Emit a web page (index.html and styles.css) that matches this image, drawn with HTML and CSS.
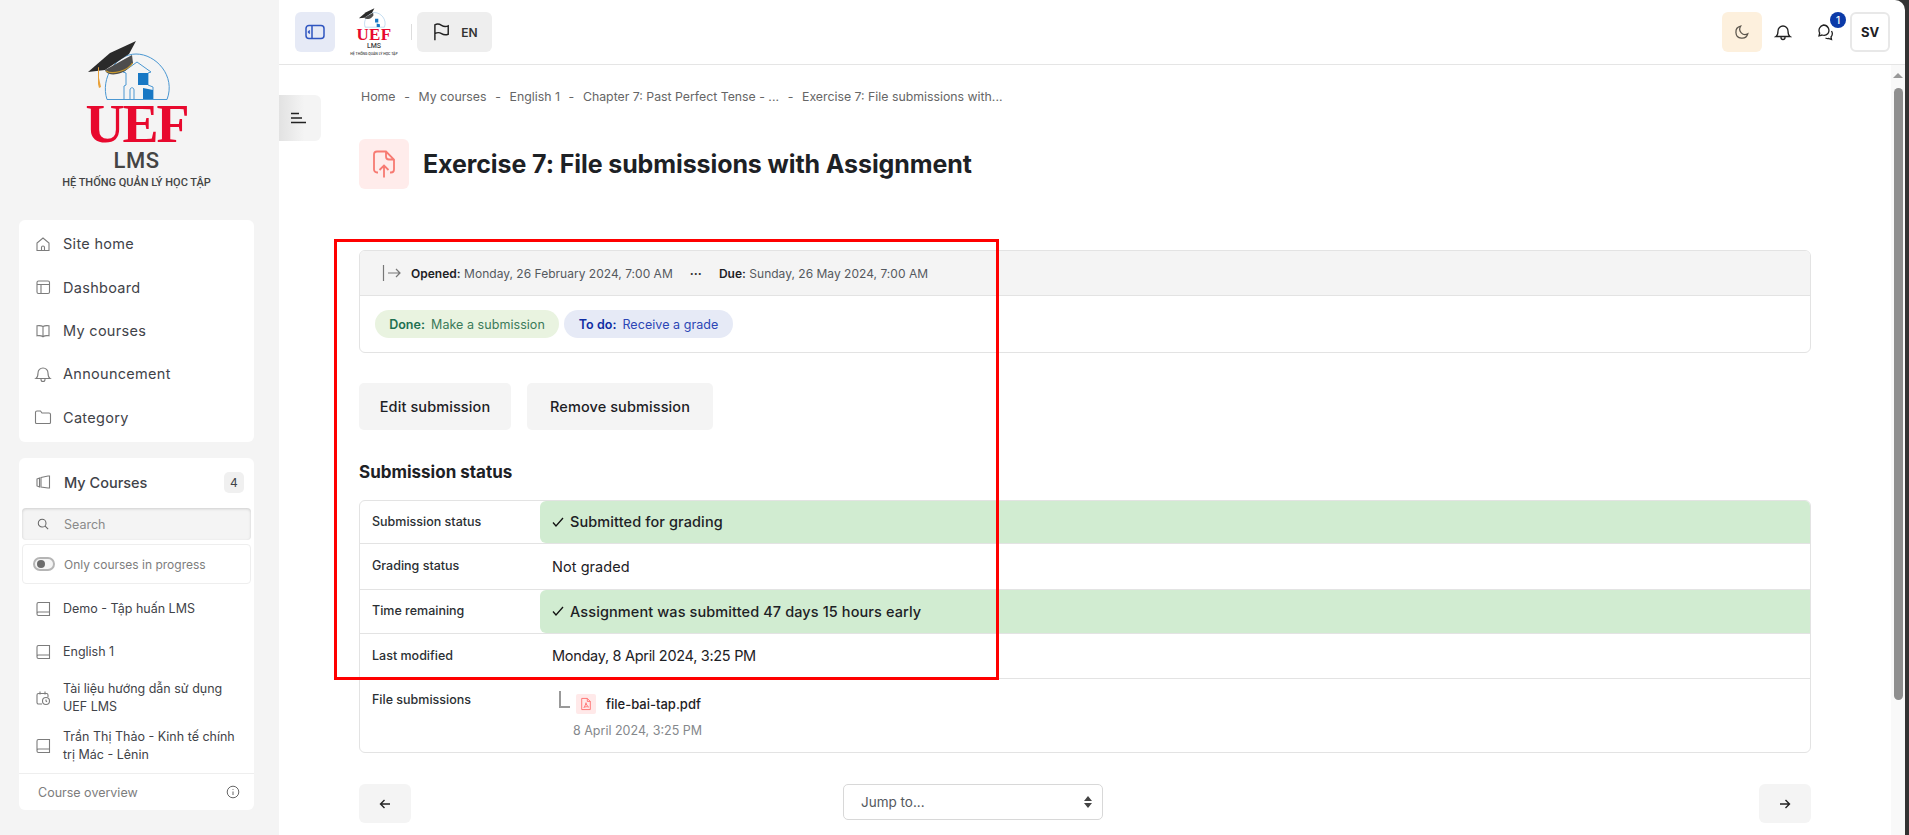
FILE: index.html
```html
<!DOCTYPE html>
<html lang="en">
<head>
<meta charset="utf-8">
<title>Exercise 7: File submissions with Assignment</title>
<link rel="stylesheet" href="styles.css">
</head>
<body>
<div class="window">
  <aside class="sidebar">
    <div class="brand">
      <svg class="brand-art" viewBox="0 0 85 62" aria-hidden="true">
        <path class="arch" d="M21 59.500C14 38 30 14 50 14C70 14 90 36 81 59.500Z"/>
        <path class="tower" d="M38 59V46L40 45V33L37 32L51 22L65 32L62 33V45L67 47V59M44 59V50C44 47 48 47 48 50V59"/>
        <path class="tower-blue" d="M52 33H62V45H52ZM57 48L67 50V59H57Z"/>
        <path class="cap-b" d="M19 30L46 15L47 23C43 29 37 33 31 34C26 35 22 34 20 32Z"/>
        <path class="cap-line" d="M20 31C26 35 42 31 46.500 23"/>
        <path class="cap-t" d="M2 32L24 13L50 1L43 14L19 30Z"/>
        <path class="tassel" d="M12 27.500L13 27V38L15 47L13 48L12 44Z"/>
      </svg>
      <div class="brand-uef">UEF</div>
      <div class="brand-lms">LMS</div>
      <div class="brand-sub">HỆ THỐNG QUẢN LÝ HỌC TẬP</div>
    </div>

    <nav class="card nav-card">
      <a class="nav-item"><svg class="ico" viewBox="0 0 16 16"><path d="M2 14.500V7L8 2l6 5v7.500zM6.500 14.500v-3a1.500 1.500 0 0 1 3 0v3"/></svg>Site home</a>
      <a class="nav-item"><svg class="ico" viewBox="0 0 16 16"><rect x="2" y="2" width="12.500" height="12.500" rx="1.500"/><path d="M2 5.500h12.500M6 5.500v9"/></svg>Dashboard</a>
      <a class="nav-item"><svg class="ico" viewBox="0 0 16 16"><path d="M8 3.500C6.500 2.600 4 2.500 2 2.800v10c2-.3 4.500-.2 6 .9 1.500-1.100 4-1.200 6-.9v-10c-2-.3-4.500-.2-6 .7zM8 3.500v10.200"/></svg>My courses</a>
      <a class="nav-item"><svg class="ico ico-l" viewBox="0 0 18 18"><path d="M2 13.500c1.500-1 2-2.500 2-5.500a5 5 0 0 1 10 0c0 3 .5 4.500 2 5.500zM7 13.500v1a2 2 0 0 0 4 0v-1"/></svg>Announcement</a>
      <a class="nav-item"><svg class="ico ico-l" viewBox="0 0 18 18"><path d="M1.500 4.500a1.500 1.500 0 0 1 1.500-1.500h3.500l1.500 2h7a1.500 1.500 0 0 1 1.500 1.500v8a1 1 0 0 1-1 1H2.500a1 1 0 0 1-1-1z"/></svg>Category</a>
    </nav>

    <section class="card courses-card">
      <header class="courses-head">
        <svg class="ico" viewBox="0 0 16 16"><path d="M6 3.500l7-1.500h1.500v12H13l-7-1zM6 3.500v9.500M2 5l2.500-1v9L2 12z"/></svg>
        <span class="courses-title">My Courses</span>
        <span class="count">4</span>
      </header>
      <div class="search">
        <svg class="ico-search" viewBox="0 0 14 14"><circle cx="6" cy="6" r="4.500"/><path d="M9.500 9.500L13 13"/></svg>
        <span>Search</span>
      </div>
      <div class="progress-toggle">
        <span class="switch"><span class="knob"></span></span>
        <span>Only courses in progress</span>
      </div>
      <ul class="course-list">
        <li class="course course-one"><svg class="ico" viewBox="0 0 16 16"><path d="M2 12.500V3a1.500 1.500 0 0 1 1.500-1.500h11V14.500h-11A1.500 1.500 0 0 1 2 13v-.5A1.500 1.500 0 0 1 3.500 11h11"/></svg>Demo - Tập huấn LMS</li>
        <li class="course course-one"><svg class="ico" viewBox="0 0 16 16"><path d="M2 12.500V3a1.500 1.500 0 0 1 1.500-1.500h11V14.500h-11A1.500 1.500 0 0 1 2 13v-.5A1.500 1.500 0 0 1 3.500 11h11"/></svg>English 1</li>
        <li class="course course-two"><svg class="ico" viewBox="0 0 16 16"><path d="M7 14H3.500A1.500 1.500 0 0 1 2 12.500V5a1.500 1.500 0 0 1 1.500-1.500h8A1.500 1.500 0 0 1 13 5v2M5 1.500v3M10 1.500v3"/><circle cx="11" cy="11" r="3.500"/><path d="M11 9.500V11l1 .8"/></svg><span>Tài liệu hướng dẫn sử dụng UEF LMS</span></li>
        <li class="course course-two"><svg class="ico" viewBox="0 0 16 16"><path d="M2 12.500V3a1.500 1.500 0 0 1 1.500-1.500h11V14.500h-11A1.500 1.500 0 0 1 2 13v-.5A1.500 1.500 0 0 1 3.500 11h11"/></svg><span>Trần Thị Thảo - Kinh tế chính trị Mác - Lênin</span></li>
      </ul>
      <footer class="courses-foot">
        <span>Course overview</span>
        <svg class="ico-info" viewBox="0 0 14 14"><circle cx="7" cy="7" r="5.800"/><path d="M7 6.500v3.500M7 4v.8"/></svg>
      </footer>
    </section>
  </aside>

  <div class="main">
    <header class="topbar">
      <button class="tb-btn tb-blue"><svg viewBox="0 0 20 20" class="tb-ico"><rect x="1" y="3.500" width="18" height="13" rx="3"/><path d="M7 3.500v13M4.800 8.500L3.500 10l1.300 1.500"/></svg></button>
      <div class="mini-brand">
        <svg class="mini-art" viewBox="0 0 85 62" aria-hidden="true">
          <path class="arch" d="M21 59.500C14 38 30 14 50 14C70 14 90 36 81 59.500Z"/>
          <path class="tower-blue" d="M52 33H62V45H52ZM57 48L67 50V59H57Z"/>
          <path class="cap-b" d="M19 30L46 15L47 23C43 29 37 33 31 34C26 35 22 34 20 32Z"/>
          <path class="cap-t" d="M2 32L24 13L50 1L43 14L19 30Z"/>
        </svg>
        <div class="mini-uef">UEF</div>
        <div class="mini-lms">LMS</div>
        <div class="mini-sub">HỆ THỐNG QUẢN LÝ HỌC TẬP</div>
      </div>
      <span class="tb-divider"></span>
      <button class="tb-btn tb-lang"><svg viewBox="0 0 18 18" class="tb-ico-dark tb-flag"><path d="M3.500 16.500V2.500C6 1 8 2 9.500 3s3.500 1.500 6 .5V11c-2.500 1-4.500.5-6-.5S6 9 3.500 10.500"/></svg><span>EN</span></button>
      <span class="tb-spacer"></span>
      <button class="tb-btn tb-moon"><svg viewBox="0 0 18 18" class="tb-ico-moon"><path d="M7.500 2.500a6.800 6.800 0 1 0 8 8.500 6 6 0 0 1-8-8.500z"/></svg></button>
      <button class="tb-plain"><svg viewBox="0 0 18 18" class="tb-ico-dark"><path d="M2 13.500c1.500-1 2-2.500 2-5.500a5 5 0 0 1 10 0c0 3 .5 4.500 2 5.500zM7 13.500v1a2 2 0 0 0 4 0v-1"/></svg></button>
      <button class="tb-plain tb-chat"><svg viewBox="0 0 18 18" class="tb-ico-dark"><path d="M7.500 2a5.500 5.500 0 0 1 4.500 8.500 5.500 5.500 0 0 1-6 1.500L3 12.800l.7-2.800A5.500 5.500 0 0 1 7.500 2zM15.500 8c1.200 2 .8 4.500-.5 6l.5 2.500-3-1c-1 .2-2 0-3-.5"/></svg><span class="chat-badge">1</span></button>
      <button class="tb-btn tb-user">SV</button>
    </header>

    <div class="body-row">
      <button class="drawer-toggle"><svg viewBox="0 0 16 12"><path d="M1 1.500h8M1 6h11M1 10.500h15"/></svg></button>
      <main class="content">
        <ol class="crumbs">
          <li>Home</li><li class="sep">-</li>
          <li>My courses</li><li class="sep">-</li>
          <li>English 1</li><li class="sep">-</li>
          <li>Chapter 7: Past Perfect Tense - ...</li><li class="sep">-</li>
          <li>Exercise 7: File submissions with...</li>
        </ol>
        <div class="page-head">
          <span class="page-ico"><svg viewBox="0 0 24 28"><path d="M6 22H5a3 3 0 0 1-3-3V4a3 3 0 0 1 3-3h9l8 8v10a3 3 0 0 1-3 3h-1M14 1v5a3 3 0 0 0 3 3h5M12 27V15M7.500 19.500L12 15l4.500 4.500"/></svg></span>
          <h1>Exercise 7: File submissions with Assignment</h1>
        </div>

        <section class="activity">
          <div class="dates">
            <svg class="date-ico" viewBox="0 0 20 18"><path class="date-bar" d="M1.500 1v16"/><path d="M6 9h12M14 5l4 4-4 4"/></svg>
            <span><b>Opened:</b> Monday, 26 February 2024, 7:00 AM</span>
            <span class="dots">···</span>
            <span><b>Due:</b> Sunday, 26 May 2024, 7:00 AM</span>
          </div>
          <div class="pills">
            <span class="pill pill-done"><b>Done:</b> Make a submission</span>
            <span class="pill pill-todo"><b>To do:</b> Receive a grade</span>
          </div>
        </section>

        <div class="actions">
          <button class="btn btn-edit">Edit submission</button>
          <button class="btn btn-remove">Remove submission</button>
        </div>

        <h2>Submission status</h2>

        <div class="status">
          <div class="row row-a"><div class="label">Submission status</div><div class="value ok"><svg class="check" viewBox="0 0 12 10"><path d="M1 5.500L4 9l7-8"/></svg>Submitted for grading</div></div>
          <div class="row row-b"><div class="label">Grading status</div><div class="value">Not graded</div></div>
          <div class="row row-c"><div class="label">Time remaining</div><div class="value ok"><svg class="check" viewBox="0 0 12 10"><path d="M1 5.500L4 9l7-8"/></svg>Assignment was submitted 47 days 15 hours early</div></div>
          <div class="row row-d"><div class="label">Last modified</div><div class="value">Monday, 8 April 2024, 3:25 PM</div></div>
          <div class="row row-e">
            <div class="label label-top">File submissions</div>
            <div class="files">
              <div class="file-line">
                <span class="tree"></span>
                <span class="pdf"><svg viewBox="0 0 14 16"><path d="M2 1.500h6.500L12 5v9.500H2zM8.500 1.500V5H12M4.500 12c1-1 2.500-4 2.500-5.500 0 1.500 1.500 4 3 5-1.500-.5-4-.5-5.500.5z"/></svg></span>
                <span class="file-name">file-bai-tap.pdf</span>
              </div>
              <div class="file-date">8 April 2024, 3:25 PM</div>
            </div>
          </div>
        </div>

        <div class="pager">
          <button class="pager-btn"><svg viewBox="0 0 12 12"><path d="M11 6H1.500M5.500 2L1.500 6l4 4"/></svg></button>
          <div class="jump"><span>Jump to...</span><svg viewBox="0 0 8 12"><path d="M4 0L8 5H0zM4 12L0 7h8z"/></svg></div>
          <button class="pager-btn"><svg viewBox="0 0 12 12"><path d="M1 6h9.500M6.500 2l4 4-4 4"/></svg></button>
        </div>
      </main>
      <div class="scrollbar">
        <span class="sb-up"></span>
        <span class="sb-thumb"></span>
      </div>
    </div>
    <div class="annotation"></div>
  </div>
</div>
</body>
</html>
```

FILE: styles.css
```css
* { box-sizing: border-box; }
html, body { margin: 0; height: 100%; overflow: hidden; }
body { background: #333; font-family: Inter, "Noto Sans", sans-serif; color: #1d2125; }
button { font: inherit; border: 0; padding: 0; margin: 0; color: inherit; }
ul, ol { list-style: none; margin: 0; padding: 0; }

.window { display: flex; height: 835px; width: 1905px; background: #fff; border-top-right-radius: 10px; overflow: hidden; }

/* sidebar */
.sidebar { width: 279px; flex: none; background: #f4f4f4; padding: 0 25px 0 19px; }
.brand { height: 220px; padding-top: 40px; display: flex; flex-direction: column; align-items: center; margin: 0 -6px 0 -6px; }
.brand-art { width: 85px; height: 62px; margin-right: 16px; flex: none; }
.arch { fill: none; stroke: #4a97d2; stroke-width: 1; }
.tower { fill: none; stroke: #4a97d2; stroke-width: 1; }
.tower-blue { fill: #1878c4; }
.cap-b { fill: #4d4d4d; }
.cap-line { fill: none; stroke: #c99a2e; stroke-width: 1.200; }
.cap-t { fill: #2a2a2a; }
.tassel { fill: #e9a23b; }
.brand-uef { font: 700 54px/42px "Liberation Serif", serif; color: #e8092e; letter-spacing: -2px; margin-top: 1px; }
.brand-lms { font: 500 22px/24px Roboto, sans-serif; color: #444; letter-spacing: .5px; margin-top: 4px; }
.brand-sub { font: 500 11px/14px Roboto, sans-serif; color: #444; margin-top: 3px; white-space: nowrap; }

.card { background: #fff; border-radius: 6px; }
.ico, .ico-l { width: 16px; height: 16px; flex: none; fill: none; stroke: #7c7c7c; stroke-width: 1.100; }
.ico-l { width: 18px; height: 18px; margin: 0 -1px; }
.nav-card { height: 222px; padding: 2px 0 3px; display: flex; flex-direction: column; justify-content: space-between; margin-bottom: 16px; }
.nav-item { flex: 1; display: flex; align-items: center; gap: 12px; padding-left: 16px; font-size: 14.500px; color: #3f4349; letter-spacing: .3px; }
.courses-card { height: 352px; padding: 0; display: flex; flex-direction: column; }
.courses-head { height: 50px; flex: none; display: flex; align-items: center; gap: 12px; padding: 0 10px 2px 16px; font-size: 14.500px; color: #3f4349; }
.courses-head .ico { margin-right: 1px; }
.courses-title { flex: 1; font-weight: 500; }
.count { width: 20px; height: 21px; background: #f0f0f0; border-radius: 5px; font-size: 12px; display: flex; align-items: center; justify-content: center; }
.search { height: 32px; flex: none; margin: 0 3px 4px; background: #f4f4f4; border-radius: 4px; box-shadow: inset 0 1px 3px rgba(0,0,0,.16); display: flex; align-items: center; gap: 15px; padding-left: 15px; font-size: 12.500px; color: #8a8a8a; }
.ico-search { width: 12px; height: 12px; fill: none; stroke: #666; stroke-width: 1.200; }
.progress-toggle { height: 40px; flex: none; margin: 0 3px; border: 1px solid #eeeeee; border-radius: 4px; display: flex; align-items: center; gap: 9px; padding-left: 10px; font-size: 12px; color: #7d7d7d; }
.switch { width: 22px; height: 14px; border: 2px solid #b5b5b5; border-radius: 8px; background: #f4f4f4; display: flex; align-items: center; padding-left: 2px; flex: none; }
.knob { width: 8px; height: 8px; border-radius: 50%; background: #6b6b6b; }
.course-list { flex: 1; padding-top: 3px; }
.course { display: flex; align-items: center; gap: 12px; padding: 0 5px 0 16px; font-size: 12.500px; line-height: 18px; color: #3f4349; }
.course-one { height: 43px; }
.course-two { height: 43px; margin-bottom: 5px; }
.course-one + .course-two { margin-top: 3px; }
.courses-foot { height: 37px; flex: none; border-top: 1px solid #eeeeee; display: flex; align-items: center; justify-content: space-between; padding: 0 14px 0 19px; font-size: 12.500px; color: #7d7d7d; }
.ico-info { width: 14px; height: 14px; fill: none; stroke: #666; stroke-width: 1; }

/* top bar */
.main { flex: 1; min-width: 0; display: flex; flex-direction: column; position: relative; }
.topbar { height: 65px; flex: none; border-bottom: 1px solid #e5e5e5; display: flex; align-items: center; padding: 0 15px 0 16px; }
.tb-btn { width: 40px; height: 40px; border-radius: 6px; display: flex; align-items: center; justify-content: center; flex: none; }
.tb-blue { background: #e6eaf6; }
.tb-ico { width: 20px; height: 20px; fill: none; stroke: #2f55c0; stroke-width: 1.500; }
.mini-brand { width: 50px; margin: 0 12px 0 14px; height: 48px; display: flex; flex-direction: column; align-items: center; flex: none; }
.mini-art { width: 28px; height: 20px; flex: none; margin-right: 4px; }
.mini-uef { font: 700 17px/13px "Liberation Serif", serif; color: #e8092e; letter-spacing: .3px; }
.mini-lms { font: 500 7px/9px Roboto, sans-serif; color: #444; margin-top: 1px; }
.mini-sub { font: 500 3.500px/6px Roboto, sans-serif; color: #444; white-space: nowrap; }
.tb-divider { width: 1px; height: 16px; background: #ddd; flex: none; margin-right: 5px; }
.tb-lang { width: 75px; background: #eeeeee; gap: 10px; font-size: 12px; font-weight: 600; color: #333; }
.tb-ico-dark { width: 18px; height: 18px; fill: none; stroke: #222; stroke-width: 1.300; }
.tb-flag { width: 20px; height: 20px; }
.tb-spacer { flex: 1; }
.tb-moon { background: #fdf0dd; }
.tb-ico-moon { width: 16px; height: 16px; fill: none; stroke: #5c564d; stroke-width: 1.400; }
.tb-plain { width: 42px; height: 40px; background: none; display: flex; align-items: center; justify-content: center; flex: none; position: relative; }
.tb-chat { margin-right: 4px; }
.chat-badge { position: absolute; top: 0; right: 0; width: 16px; height: 16px; border-radius: 50%; background: #0b3aa8; color: #fff; font-size: 10px; font-weight: 500; display: flex; align-items: center; justify-content: center; }
.tb-user { border: 2px solid #e8e8e8; background: #fff; font-size: 13px; font-weight: 700; color: #1d2125; }

/* page body */
.body-row { flex: 1; min-height: 0; display: flex; }
.drawer-toggle { width: 42px; height: 46px; margin-top: 30px; flex: none; background: linear-gradient(90deg, #e2e2e2, #f4f4f4 60%); border-radius: 0 6px 6px 0; display: flex; align-items: center; justify-content: center; padding-right: 5px; }
.drawer-toggle svg { width: 16px; height: 12px; fill: none; stroke: #222; stroke-width: 1.400; }
.content { flex: 1; min-width: 0; padding: 0 80px 0 38px; }

.crumbs { display: flex; height: 30px; margin-top: 16px; align-items: center; font-size: 12.300px; color: #666; padding-left: 2px; white-space: nowrap; }
.crumbs .sep { margin: 0 8.700px; }
.page-head { display: flex; align-items: center; gap: 14px; margin-top: 28px; height: 50px; }
.page-ico { width: 50px; height: 50px; border-radius: 6px; background: #ffeceb; display: flex; align-items: center; justify-content: center; flex: none; }
.page-ico svg { width: 24px; height: 29px; fill: none; stroke: #f77a72; stroke-width: 1.800; }
h1 { margin: 0; font-size: 25px; line-height: 30px; font-weight: 700; color: #1d2125; letter-spacing: -.1px; }

.activity { margin-top: 61px; height: 103px; border: 1px solid #e3e3e3; border-radius: 6px; overflow: hidden; }
.dates { height: 45px; background: #f4f4f4; border-bottom: 1px solid #e3e3e3; display: flex; align-items: center; padding-left: 22px; font-size: 12px; letter-spacing: .02px; color: #55595e; white-space: nowrap; }
.dates b { color: #1d2125; font-weight: 600; }
.date-ico { width: 20px; height: 20px; flex: none; margin-right: 9px; fill: none; stroke: #777; stroke-width: 1.200; }
.dots { margin: 0 17px; font-weight: 700; color: #333; }
.pills { display: flex; gap: 5px; padding: 14px 0 0 15px; }
.pill { height: 28px; border-radius: 14px; display: flex; align-items: center; font-size: 12.500px; letter-spacing: .05px; white-space: nowrap; justify-content: center; }
.pill b { font-weight: 600; margin-right: 6px; }
.pill-done { width: 184px; background: #e9f3e0; color: #3b7a5a; }
.pill-done b { color: #1e7051; }
.pill-todo { width: 169px; background: #e6eaf6; color: #2c46b5; }
.pill-todo b { color: #0f2da3; }

.actions { display: flex; gap: 16px; margin-top: 30px; }
.btn { height: 47px; background: #f4f4f4; border-radius: 5px; font-size: 14.500px; font-weight: 500; letter-spacing: .1px; color: #1d2125; }
.btn-edit { width: 152px; }
.btn-remove { width: 186px; }
h2 { margin: 29px 0 0; height: 26px; font-size: 17px; line-height: 26px; font-weight: 700; color: #1d2125; }

.status { margin-top: 15px; border: 1px solid #e3e3e3; border-radius: 6px; height: 253px; overflow: hidden; }
.row { display: flex; border-bottom: 1px solid #e3e3e3; }
.row-a { height: 43px; }
.row-b { height: 46px; }
.row-c { height: 44px; }
.row-d { height: 45px; }
.row-d .value { letter-spacing: -.3px; }
.row-e { border-bottom: 0; height: 74px; }
.label { width: 180px; flex: none; padding: 0 0 2px 12px; display: flex; align-items: center; font-size: 12.500px; font-weight: 500; color: #2b2f33; }
.label-top { align-items: flex-start; padding-top: 13px; }
.value { flex: 1; display: flex; align-items: center; padding: 0 0 1px 12px; font-size: 14.500px; letter-spacing: .05px; color: #1d2125; }
.ok { background: #d1ecd1; border-radius: 6px 0 0 6px; font-weight: 500; letter-spacing: .1px; }
.check { width: 12px; height: 10px; margin-right: 6px; fill: none; stroke: #111; stroke-width: 1.300; flex: none; }
.files { padding: 11px 0 0 19px; }
.file-line { display: flex; align-items: flex-start; }
.tree { width: 11px; height: 17px; border-left: 2px solid #999; border-bottom: 2px solid #999; flex: none; margin-top: 1px; }
.pdf { width: 20px; height: 20px; background: #ffe9e9; border-radius: 2px; margin: 4px 10px 0 6px; display: flex; align-items: center; justify-content: center; flex: none; }
.pdf svg { width: 12px; height: 14px; fill: none; stroke: #f66; stroke-width: 1; }
.file-name { font-size: 13px; line-height: 28px; color: #1d2125; font-weight: 500; }
.file-date { font-size: 12.500px; line-height: 18px; color: #85888c; padding: 4px 0 0 14px; }

.pager { display: flex; align-items: flex-start; margin-top: 31px; }
.pager-btn { width: 52px; height: 39px; background: #f4f4f4; border-radius: 6px; display: flex; align-items: center; justify-content: center; flex: none; }
.pager-btn svg { width: 12px; height: 12px; fill: none; stroke: #222; stroke-width: 1.400; }
.jump { width: 260px; height: 36px; margin: 0 auto 0 432px; border: 1px solid #d8d8d8; border-radius: 5px; display: flex; align-items: center; justify-content: space-between; padding: 0 10px 0 17px; font-size: 13.500px; color: #55595e; }
.jump svg { width: 8px; height: 12px; fill: #444; }

.scrollbar { width: 14px; flex: none; background: #f9f9f9; display: flex; flex-direction: column; align-items: center; padding-top: 8px; }
.sb-up { width: 0; height: 0; border-left: 5px solid transparent; border-right: 5px solid transparent; border-bottom: 5px solid #999; flex: none; }
.sb-thumb { width: 9px; height: 612px; margin-top: 10px; border-radius: 5px; background: #8f8f8f; flex: none; }

.annotation { position: absolute; left: 55px; top: 239px; width: 665px; height: 441px; border: 3px solid #f00; pointer-events: none; }
```
